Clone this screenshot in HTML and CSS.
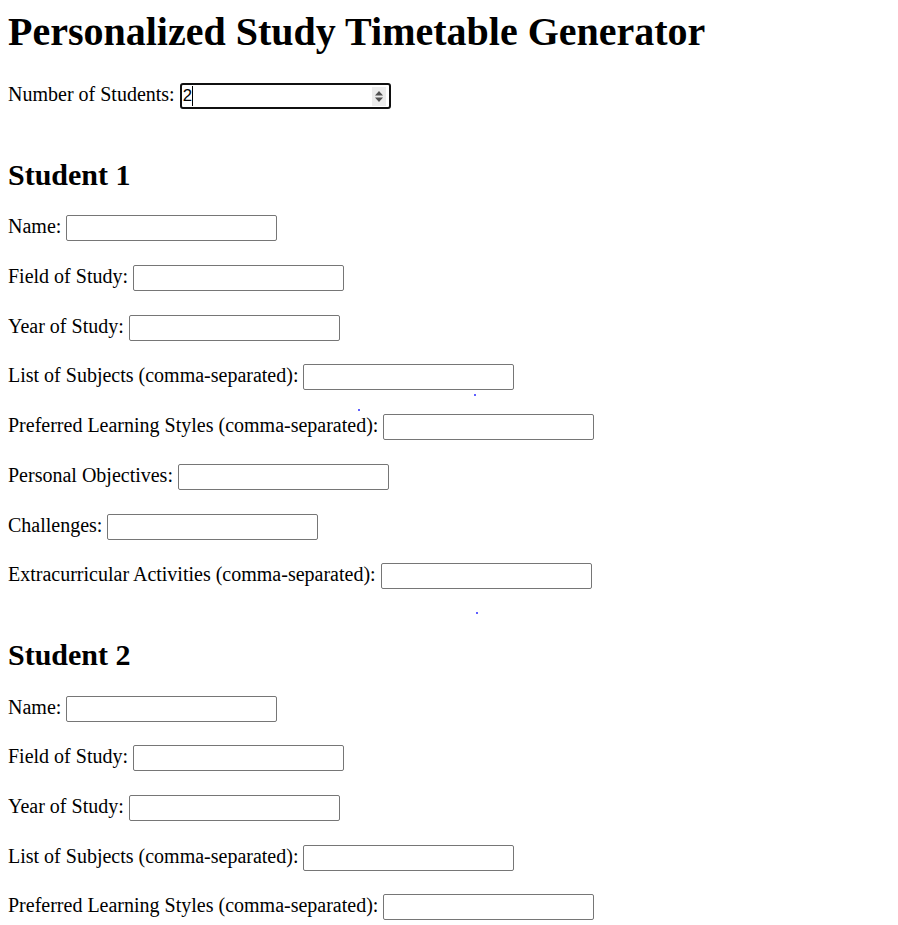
FILE: index.html
```html
<!DOCTYPE html>
<html lang="en">
<head>
<meta charset="utf-8">
<title>Personalized Study Timetable Generator</title>
<link rel="stylesheet" href="styles.css">
</head>
<body>
<h1 class="title">Personalized Study Timetable Generator</h1>

<div class="field count-field">
  <label class="label" for="count">Number of Students:</label>
  <span class="number-wrap">
    <input class="number-input" id="count" type="text" value="2">
    <span class="caret"></span>
    <svg class="spinner" width="14" height="19" viewBox="0 0 14 19" aria-hidden="true">
      <rect width="14" height="19" fill="#ececec"/>
      <path d="M3 8.5 L11 8.5 L7 4 Z" fill="#505050"/>
      <path d="M3 10.5 L11 10.5 L7 15 Z" fill="#505050"/>
    </svg>
  </span>
</div>

<section class="student">
  <h2 class="student-title">Student 1</h2>
  <div class="field"><label class="label">Name:</label><input class="text-input" type="text"></div>
  <div class="field"><label class="label">Field of Study:</label><input class="text-input" type="text"></div>
  <div class="field"><label class="label">Year of Study:</label><input class="text-input" type="text"></div>
  <div class="field"><label class="label">List of Subjects (comma-separated):</label><input class="text-input" type="text"></div>
  <div class="field"><label class="label">Preferred Learning Styles (comma-separated):</label><input class="text-input" type="text"></div>
  <div class="field"><label class="label">Personal Objectives:</label><input class="text-input" type="text"></div>
  <div class="field"><label class="label">Challenges:</label><input class="text-input" type="text"></div>
  <div class="field"><label class="label">Extracurricular Activities (comma-separated):</label><input class="text-input" type="text"></div>
</section>

<section class="student">
  <h2 class="student-title">Student 2</h2>
  <div class="field"><label class="label">Name:</label><input class="text-input" type="text"></div>
  <div class="field"><label class="label">Field of Study:</label><input class="text-input" type="text"></div>
  <div class="field"><label class="label">Year of Study:</label><input class="text-input" type="text"></div>
  <div class="field"><label class="label">List of Subjects (comma-separated):</label><input class="text-input" type="text"></div>
  <div class="field"><label class="label">Preferred Learning Styles (comma-separated):</label><input class="text-input" type="text"></div>
  <div class="field"><label class="label">Personal Objectives:</label><input class="text-input" type="text"></div>
  <div class="field"><label class="label">Challenges:</label><input class="text-input" type="text"></div>
  <div class="field"><label class="label">Extracurricular Activities (comma-separated):</label><input class="text-input" type="text"></div>
</section>

<span class="speck speck-a"></span>
<span class="speck speck-b"></span>
<span class="speck speck-c"></span>
</body>
</html>
```

FILE: styles.css
```css
html {
  background: #fff;
}

body {
  margin: 0 8px 8px;
  font-family: "Liberation Serif", "Times New Roman", serif;
  font-size: 20px;
  color: #000;
}

.title {
  font-size: 40px;
  font-weight: bold;
  line-height: 44px;
  margin: 10px 0 29px;
}

.field {
  display: flex;
  align-items: flex-start;
  gap: 5px;
  height: 26px;
  margin-bottom: 23.7px;
}

.label {
  line-height: 22px;
  white-space: nowrap;
}

.student-title {
  font-size: 30px;
  font-weight: bold;
  line-height: 33px;
  margin: 48.6px 0 24.8px;
}

.text-input {
  box-sizing: border-box;
  width: 211px;
  height: 26px;
  margin: 0;
  padding: 1px 2px;
  border: 1px solid #767676;
  border-radius: 2px;
  background: #fff;
  font-family: "Liberation Sans", Arial, sans-serif;
  font-size: 16.67px;
}

.number-wrap {
  position: relative;
  display: block;
  width: 211px;
  height: 26px;
}

.number-input {
  box-sizing: border-box;
  width: 211px;
  height: 26px;
  margin: 0;
  padding: 0 1px;
  border: 2px solid #101010;
  border-radius: 3px;
  background: #fff;
  color: #000;
  font-family: "Liberation Sans", Arial, sans-serif;
  font-size: 16.67px;
  outline: none;
}

.caret {
  position: absolute;
  left: 12.5px;
  top: 3px;
  width: 1px;
  height: 20px;
  background: #000;
}

.spinner {
  position: absolute;
  left: 192px;
  top: 3.5px;
}

.speck {
  position: absolute;
  width: 2px;
  height: 2px;
  background: #2b2bff;
  border-radius: 1px;
}

.speck-a { left: 474px; top: 393.5px; }
.speck-b { left: 476px; top: 612px; }
.speck-c { left: 358px; top: 409px; }
```
